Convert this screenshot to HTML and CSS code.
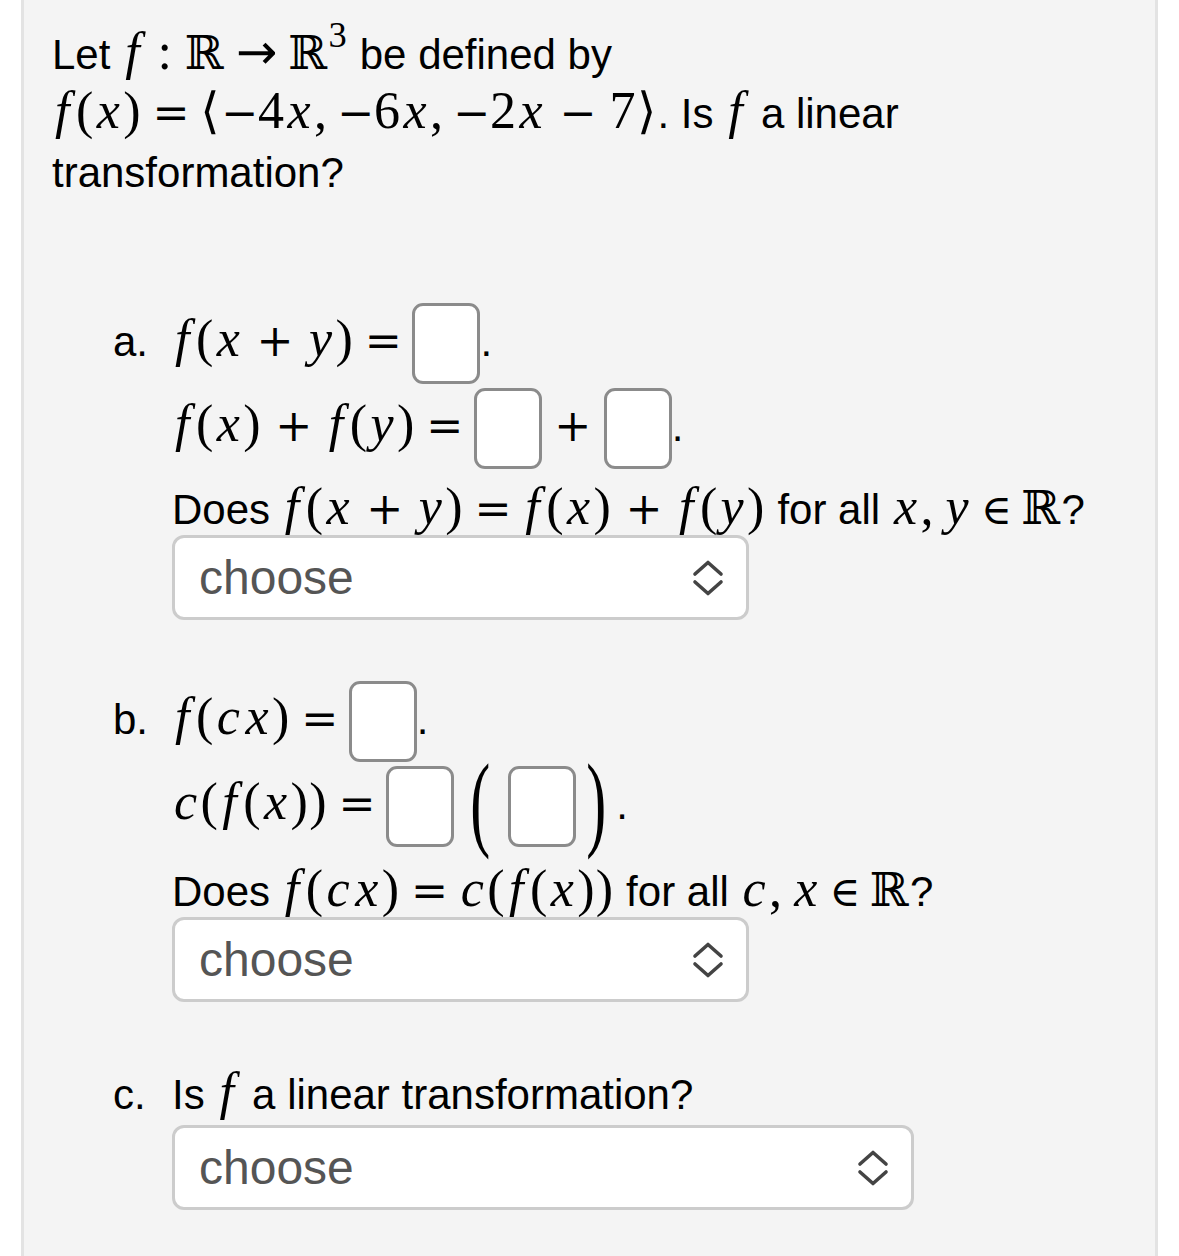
FILE: index.html
```html
<!DOCTYPE html>
<html lang="en">
<head>
<meta charset="utf-8">
<title>Linear transformation</title>
<link rel="stylesheet" href="styles.css">
</head>
<body>
<div class="panel">
  <p class="intro">Let <span class="m"><i class="f">f</i><span class="rel">:</span><span class="bb">ℝ</span><span class="rel arrow">→</span><span class="bb">ℝ</span><span class="sup">3</span></span> be defined by <span class="m"><i class="f">f</i>(<i>x</i>)<span class="rel op">=</span><span class="ang">⟨</span><span class="op">−</span>4<i>x</i>,<span class="punct"></span><span class="op">−</span>6<i>x</i>,<span class="punct"></span><span class="op">−</span>2<i>x</i><span class="bin op">−</span>7<span class="ang">⟩</span></span>. Is <span class="m"><i class="f">f</i></span> a linear transformation?</p>

  <div class="part part-a">
    <div class="label">a.</div>
    <div class="rows">
      <div class="row"><span class="m"><i class="f">f</i>(<i>x</i><span class="bin op">+</span><i>y</i>)<span class="rel op">=</span></span><span class="ans"></span>.</div>
      <div class="row"><span class="m"><i class="f">f</i>(<i>x</i>)<span class="bin op">+</span><i class="f">f</i>(<i>y</i>)<span class="rel op">=</span></span><span class="ans"></span><span class="m"><span class="bin op wide">+</span></span><span class="ans"></span>.</div>
      <div class="q">Does <span class="m"><i class="f">f</i>(<i>x</i><span class="bin op">+</span><i>y</i>)<span class="rel op">=</span><i class="f">f</i>(<i>x</i>)<span class="bin op">+</span><i class="f">f</i>(<i>y</i>)</span> for all <span class="m"><i>x</i>,<span class="punct"></span><i>y</i><span class="rel in">∈</span><span class="bb">ℝ</span></span>?</div>
      <div class="select select-short">
        <span class="choose">choose</span>
        <svg class="chev" width="32" height="36" viewBox="0 0 32 36"><path d="M3 14 L16 2.5 L29 14 M3 22 L16 33.5 L29 22" fill="none" stroke="#444" stroke-width="3.6" stroke-linecap="round" stroke-linejoin="round"/></svg>
      </div>
    </div>
  </div>

  <div class="part part-b">
    <div class="label">b.</div>
    <div class="rows">
      <div class="row"><span class="m"><i class="f">f</i>(<i>c</i><i>x</i>)<span class="rel op">=</span></span><span class="ans"></span>.</div>
      <div class="row row-tall"><span class="m"><i>c</i>(<i class="f">f</i>(<i>x</i>))<span class="rel op">=</span></span><span class="ans"></span><span class="paren lp">(</span><span class="ans"></span><span class="paren rp">)</span>.</div>
      <div class="q">Does <span class="m"><i class="f">f</i>(<i>c</i><i>x</i>)<span class="rel op">=</span><i>c</i>(<i class="f">f</i>(<i>x</i>))</span> for all <span class="m"><i>c</i>,<span class="punct"></span><i>x</i><span class="rel in">∈</span><span class="bb">ℝ</span></span>?</div>
      <div class="select select-short">
        <span class="choose">choose</span>
        <svg class="chev" width="32" height="36" viewBox="0 0 32 36"><path d="M3 14 L16 2.5 L29 14 M3 22 L16 33.5 L29 22" fill="none" stroke="#444" stroke-width="3.6" stroke-linecap="round" stroke-linejoin="round"/></svg>
      </div>
    </div>
  </div>

  <div class="part part-c">
    <div class="label">c.</div>
    <div class="rows">
      <div class="qc">Is <span class="m"><i class="f">f</i></span> a linear transformation?</div>
      <div class="select select-long">
        <span class="choose">choose</span>
        <svg class="chev" width="32" height="36" viewBox="0 0 32 36"><path d="M3 14 L16 2.5 L29 14 M3 22 L16 33.5 L29 22" fill="none" stroke="#444" stroke-width="3.6" stroke-linecap="round" stroke-linejoin="round"/></svg>
      </div>
    </div>
  </div>
</div>
</body>
</html>
```

FILE: styles.css
```css
html, body {
  margin: 0;
  padding: 0;
  background: #ffffff;
}

body {
  font-family: "Liberation Sans", Arial, Helvetica, sans-serif;
  font-size: 42px;
  color: #000000;
}

.panel {
  margin-left: 21px;
  width: 1137px;
  min-height: 1256px;
  box-sizing: border-box;
  background: #f4f4f4;
  border-left: 3px solid #e3e3e3;
  border-right: 3px solid #e3e3e3;
  padding: 26px 28px 40px 28px;
}

.intro {
  margin: 0;
  max-width: 960px;
  line-height: 58.8px;
}

.m {
  font-family: "Liberation Serif", "DejaVu Serif", serif;
  font-size: 1.24em;
  line-height: 1;
  letter-spacing: 0.025em;
  white-space: nowrap;
}

.m i {
  font-style: italic;
  padding: 0 0.04em;
}

.m i.f {
  padding: 0 0.1em 0 0.06em;
}

.rel {
  margin: 0 0.22em;
}

.bin {
  margin: 0 0.18em;
}

.op {
  font-family: "DejaVu Serif", "Liberation Serif", serif;
  font-size: 0.85em;
  letter-spacing: 0;
}

.rel.op {
  margin: 0 0.24em;
}

.bin.op {
  margin: 0 0.3em;
}

.bin.op.wide {
  margin: 0 0.28em;
}

.arrow {
  font-family: "DejaVu Sans", sans-serif;
  font-size: 0.95em;
  letter-spacing: 0;
}

.in {
  font-family: "DejaVu Serif", "DejaVu Sans", serif;
  font-size: 0.8em;
  letter-spacing: 0;
}

.punct {
  display: inline-block;
  width: 0.167em;
}

.bb {
  font-family: "DejaVu Serif", "DejaVu Sans", serif;
  font-size: 0.9em;
}

.ang {
  font-family: "DejaVu Serif", "DejaVu Sans", serif;
  font-size: 0.95em;
}

.sup {
  font-size: 0.7em;
  vertical-align: 0.6em;
  line-height: 0;
}

.part {
  display: flex;
  align-items: baseline;
  margin-left: 61px;
}

.part-a { margin-top: 99px; }
.part-b { margin-top: 59px; }
.part-c { margin-top: 64px; }

.label {
  width: 59px;
  flex: none;
  line-height: 58.8px;
}

.rows {
  flex: 1;
}

.row {
  line-height: 58.8px;
  white-space: nowrap;
}

.row-tall {
  padding-bottom: 4px;
}

.ans {
  display: inline-block;
  width: 68px;
  height: 81px;
  box-sizing: border-box;
  margin: 2px 0;
  border: 3px solid #8b8b8b;
  border-radius: 11px;
  background: #ffffff;
  vertical-align: -30px;
}

.paren {
  display: inline-block;
  font-family: "Liberation Serif", "DejaVu Serif", serif;
  font-size: 60px;
  line-height: 1;
  transform: scaleY(1.75);
  vertical-align: -3px;
}

.lp {
  margin-left: 16px;
  margin-right: 18px;
}

.rp {
  margin-left: 10px;
  margin-right: 10px;
}

.q {
  padding-top: 10px;
  line-height: 50px;
  white-space: nowrap;
}

.qc {
  line-height: 58.8px;
  white-space: nowrap;
}

.select {
  display: flex;
  align-items: center;
  justify-content: space-between;
  height: 85px;
  box-sizing: border-box;
  border: 3px solid #cccccc;
  border-radius: 12px;
  background: #ffffff;
  padding: 0 22px 0 24px;
  font-size: 48px;
  color: #555555;
}

.select-short { width: 577px; }
.select-long { width: 742px; }

.chev {
  display: block;
  flex: none;
}
```
